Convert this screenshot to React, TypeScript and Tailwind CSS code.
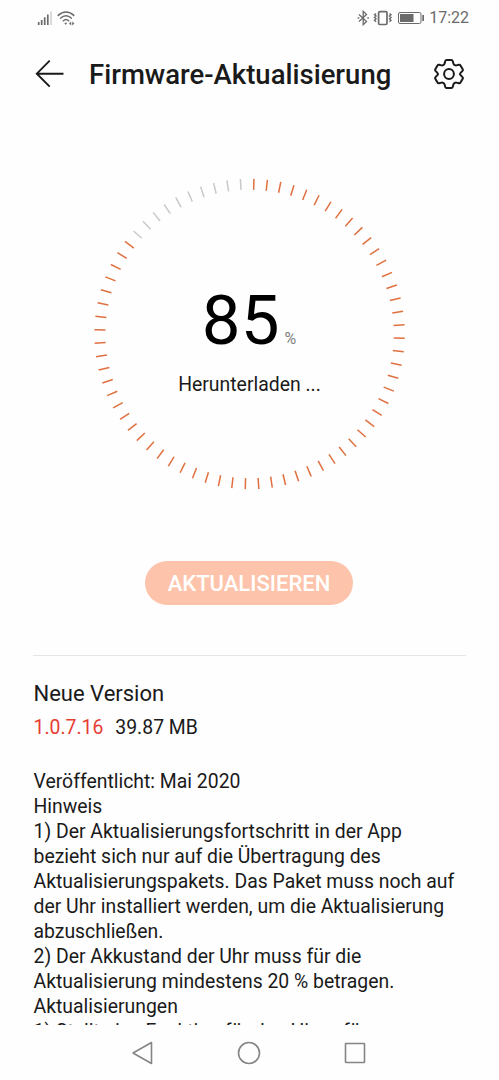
import React from 'react';

const TICK_COUNT = 72;
const FILLED_TICKS = 62;

const StatusBar: React.FC = () => (
  <div className="flex h-9 shrink-0 items-center justify-between pl-[37px] pr-[30px] text-[#6b6b6b]">
    <div className="flex items-center gap-1">
      {/* Mobile signal */}
      <svg width="16" height="16" viewBox="0 0 16 16" stroke="currentColor" strokeWidth="1.7">
        <path d="M1.7 12v3M4.7 10v5M7.7 7.3v7.7M10.8 4.5V15" />
        <path d="M14 1.5V15" stroke="#d4d4d4" />
      </svg>
      {/* Wi-Fi */}
      <svg width="18" height="16" viewBox="0 0 18 16" fill="none" stroke="currentColor" strokeWidth="1.5" strokeLinecap="round">
        <path d="M1.2 5.4C5.8 .9 12.2.9 16.8 5.4M3.8 8.1c3.1-3.2 7.3-3.2 10.4 0M6.3 10.8c1.6-1.5 3.8-1.5 5.4 0" />
        <circle cx="8.7" cy="13.5" r="1.1" fill="currentColor" stroke="none" />
        <path d="M14.2 11.6l-2.2 1.9 2.2 1.9zM15.2 11.6l2.2 1.9-2.2 1.9z" fill="currentColor" stroke="none" />
      </svg>
    </div>
    <div className="flex items-center">
      {/* Bluetooth */}
      <svg width="13" height="16" viewBox="0 0 13 16" fill="none" stroke="currentColor" strokeWidth="1.3">
        <path d="M2 4.5l7.5 7L6.2 14.7V1.3l3.3 3.2-7.5 7M.7 8h1.6M10.3 8h1.6" />
      </svg>
      {/* Vibration */}
      <svg className="ml-[3px]" width="20" height="16" viewBox="0 0 20 16" fill="none" stroke="currentColor">
        <rect x="5.6" y="1.7" width="8.4" height="12.8" rx="1.2" strokeWidth="1.7" />
        <path d="M3 3.5L1.5 4.7 3 6 1.5 7.4 3 8.8 1.5 10.2 3 11.8M16.5 3.5L18 4.7 16.5 6 18 7.4l-1.5 1.4 1.5 1.4-1.5 1.6" strokeWidth="1.4" />
      </svg>
      {/* Battery */}
      <svg className="ml-1" width="28" height="14" viewBox="0 0 28 14">
        <rect x="1.5" y="1.5" width="22.5" height="11" rx="1.5" fill="none" stroke="currentColor" />
        <path d="M3 3h13.5v8H3zM25.3 4h1.7v6h-1.7z" fill="currentColor" />
      </svg>
      <span className="ml-1 text-[16px] leading-none">17:22</span>
    </div>
  </div>
);

const Header: React.FC = () => (
  <header className="flex h-[76px] shrink-0 items-center pl-[35px] pr-[35px]">
    <svg width="30" height="30" viewBox="0 0 30 30" fill="none" stroke="currentColor" strokeWidth="1.9">
      <path d="M14.7 1.7L1.8 14.7l12.9 13M1.8 14.7h26.7" />
    </svg>
    <h1 className="ml-6 flex-1 whitespace-nowrap pt-px text-[27.5px] font-medium leading-8">Firmware-Aktualisierung</h1>
    <svg width="30" height="30" viewBox="0 0 30 30" fill="none" stroke="currentColor" strokeWidth="2" strokeLinejoin="round">
      <path d="M12.6 1h4.8q1 0 1.3 1l.8 2.7q.2.7.9 1.1l.6.4q.7.4 1.4.2l2.6-.7q1-.2 1.5.7l2.2 3.9q.5.9-.2 1.6l-1.9 2q-.6.6-.6 1.1t.6 1.1l1.9 2q.7.7.2 1.6l-2.2 3.9q-.5.9-1.5.7l-2.6-.7q-.7-.2-1.4.2l-.6.4q-.7.4-.9 1.1l-.8 2.7q-.3 1-1.3 1h-4.8q-1 0-1.3-1l-.8-2.7q-.2-.7-.9-1.1l-.6-.4q-.7-.4-1.4-.2l-2.6.7q-1 .2-1.5-.7l-2.2-3.9q-.5-.9.2-1.6l1.9-2q.6-.6.6-1.1t-.6-1.1l-1.9-2q-.7-.7-.2-1.6l2.2-3.9q.5-.9 1.5-.7l2.6.7q.7.2 1.4-.2l.6-.4q.7-.4.9-1.1l.8-2.7q.3-1 1.3-1z" />
      <circle cx="15" cy="15" r="4.9" />
    </svg>
  </header>
);

const ProgressRing: React.FC = () => (
  <div className="ml-[93px] mt-[66px] grid h-[312px] w-[312px] shrink-0">
    <svg className="col-start-1 row-start-1" width="312" height="312" viewBox="-156.6 -156 312 312">
      {Array.from({ length: TICK_COUNT }, (_, i) => (
        <line
          key={i}
          x1="0"
          x2="0"
          y1="-155.2"
          y2="-144.2"
          stroke={i < FILLED_TICKS ? '#e0703f' : '#c9c9c9'}
          strokeWidth="1.5"
          transform={`rotate(${i * 5 + 1.6})`}
        />
      ))}
    </svg>
    <div className="col-start-1 row-start-1 flex flex-col items-center pt-[103px]">
      <div className="flex items-baseline text-black">
        <span className="text-[69px] leading-[80px]">85</span>
        <span className="ml-[5px] text-[16px] text-[#808080]">%</span>
      </div>
      <p className="mt-3 pl-px text-[19.4px] leading-6">Herunterladen ...</p>
    </div>
  </div>
);

const Notes: React.FC = () => (
  <section className="mx-[33px] mt-[50px] h-[370px] shrink-0 overflow-hidden border-t border-[#e6e6e6] pl-[0.5px] pt-6">
    <h2 className="text-[22px] leading-7">Neue Version</h2>
    <div className="mt-1.5 flex gap-3 text-[19.4px] leading-7">
      <span className="text-[#e63c32]">1.0.7.16</span>
      <span>39.87 MB</span>
    </div>
    <div className="mt-[27px] whitespace-nowrap text-[19.4px] leading-[25px]">
      <p>Veröffentlicht: Mai 2020</p>
      <p>Hinweis</p>
      <p>1) Der Aktualisierungsfortschritt in der App</p>
      <p>bezieht sich nur auf die Übertragung des</p>
      <p>Aktualisierungspakets. Das Paket muss noch auf</p>
      <p>der Uhr installiert werden, um die Aktualisierung</p>
      <p>abzuschließen.</p>
      <p>2) Der Akkustand der Uhr muss für die</p>
      <p>Aktualisierung mindestens 20 % betragen.</p>
      <p>Aktualisierungen</p>
      <p>1) Stellt eine Funktion für den Hinw. für</p>
    </div>
  </section>
);

const NavBar: React.FC = () => (
  <nav className="flex h-[55px] shrink-0 items-center justify-center gap-[82px] pr-px text-[#858585]">
    <svg width="24" height="24" viewBox="0 0 24 24" fill="none" stroke="currentColor" strokeWidth="1.6" strokeLinejoin="round">
      <path d="M20.5 1.5v21L2 12z" />
    </svg>
    <svg width="24" height="24" viewBox="0 0 24 24" fill="none" stroke="currentColor" strokeWidth="1.6">
      <circle cx="12" cy="12" r="10.5" />
    </svg>
    <svg width="24" height="24" viewBox="0 0 24 24" fill="none" stroke="currentColor" strokeWidth="1.6">
      <rect x="2.5" y="2.5" width="19" height="19" rx=".5" />
    </svg>
  </nav>
);

export default function App() {
  return (
    <div className="flex h-[1080px] w-[499px] flex-col overflow-hidden bg-[#fefefe] font-['Roboto',sans-serif] text-[#1a1a1a]">
      <StatusBar />
      <Header />
      <ProgressRing />
      <button className="ml-[145px] mt-[71px] h-11 w-[208px] shrink-0 rounded-full bg-[#fec4ab] text-[22px] font-medium text-white">
        AKTUALISIEREN
      </button>
      <Notes />
      <NavBar />
    </div>
  );
}
